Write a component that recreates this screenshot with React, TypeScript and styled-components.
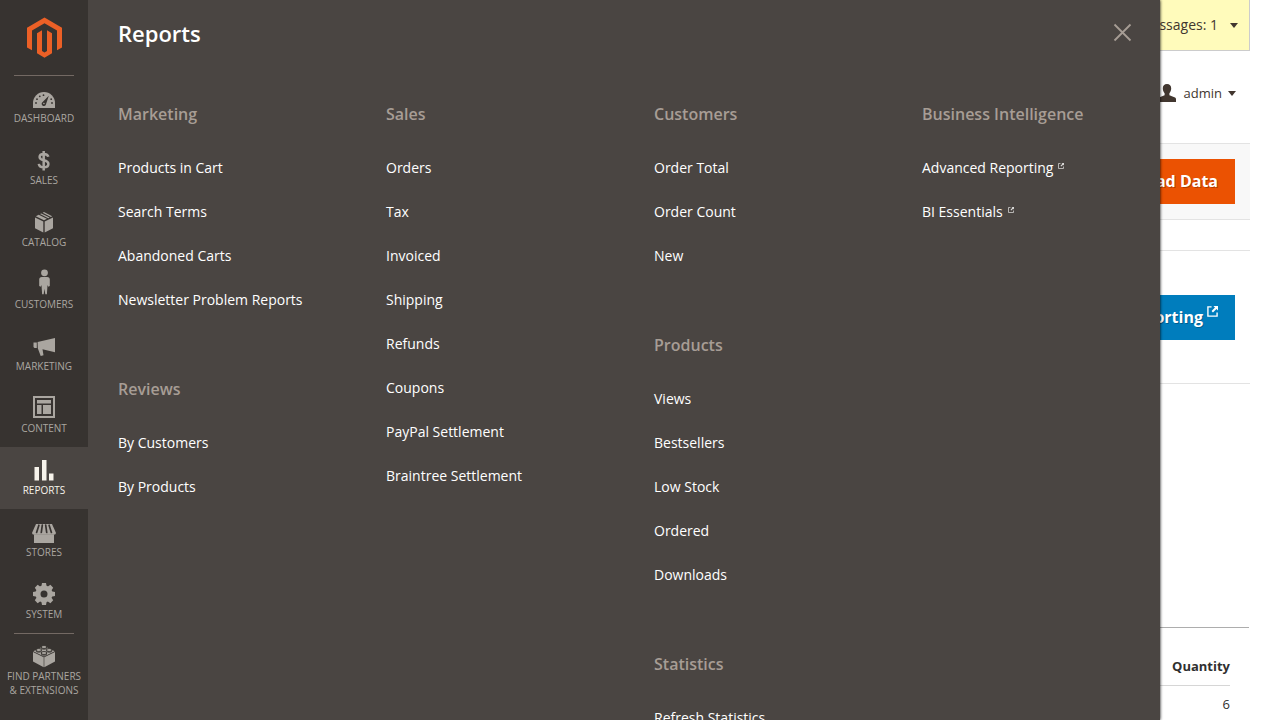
import React from "react";
import styled, { createGlobalStyle } from "styled-components";

const color = {
  rail: "#373330",
  panel: "#4a4542",
  muted: "#aaa6a0",
  heading: "#a79d95",
  active: "#f7f3eb",
  ink: "#41362f",
  orange: "#eb5202",
  blue: "#007dbd",
};

const GlobalStyle = createGlobalStyle`
  *, *::before, *::after { box-sizing: border-box; }
  body {
    margin: 0;
    background: #fff;
    color: ${color.ink};
    font-family: "Open Sans", "Liberation Sans", sans-serif;
    font-size: 14px;
    line-height: 20px;
  }
  a { color: inherit; text-decoration: none; }
  ul { list-style: none; margin: 0; padding: 0; }
  h1, h2 { margin: 0; }
  button { border: 0; background: none; font: inherit; color: inherit; cursor: pointer; }
`;

const Shell = styled.div`
  position: relative;
  display: flex;
  height: 100vh;
  overflow: hidden;
`;

/* ---------- left rail ---------- */

const Rail = styled.nav`
  flex: none;
  width: 88px;
  background: ${color.rail};
`;

const LogoLink = styled.a`
  display: flex;
  justify-content: center;
  height: 75px;
  padding-top: 17px;
`;

const RailItem = styled.li<{ $ruled?: boolean }>`
  background: ${(p) =>
    p.$ruled ? "linear-gradient(#736963, #736963) 50% 0 / 60px 1px no-repeat" : "none"};
`;

const RailLink = styled.a<{ $active?: boolean }>`
  display: flex;
  flex-direction: column;
  align-items: center;
  min-height: 62px;
  padding: 8px 4px 0;
  color: ${(p) => (p.$active ? color.active : color.muted)};
  background: ${(p) => (p.$active ? color.panel : "transparent")};
  font-size: 10px;
  line-height: 14px;
  text-align: center;
  text-transform: uppercase;
`;

const RailIcon = styled.svg`
  display: block;
  width: 40px;
  height: 28px;
  fill: currentColor;
`;

/* ---------- flyout panel ---------- */

const Flyout = styled.section`
  position: absolute;
  z-index: 2;
  top: 0;
  bottom: 0;
  left: 88px;
  right: 120px;
  overflow: hidden;
  padding: 19px 0 0 30px;
  background: ${color.panel};
  box-shadow: 0 0 3px #000;
  clip-path: inset(0 -6px 0 0);
`;

const FlyoutHeader = styled.header`
  display: flex;
  align-items: center;
  justify-content: space-between;
  height: 28px;
  margin-bottom: 55px;
  padding-right: 28px;
`;

const FlyoutTitle = styled.h1`
  color: #fff;
  font-size: 22px;
  font-weight: 600;
  line-height: 28px;
`;

const CloseButton = styled.button`
  display: flex;
  padding: 0 0 2px;
  color: ${color.heading};
`;

const Columns = styled.div`
  display: grid;
  grid-template-columns: repeat(4, minmax(0, 1fr));
  column-gap: 30px;
`;

const Column = styled.div`
  display: flex;
  flex-direction: column;
  gap: 55px;
`;

const GroupTitle = styled.h2`
  margin-bottom: 20px;
  color: ${color.heading};
  font-size: 16px;
  font-weight: 600;
  line-height: 24px;
`;

const GroupLink = styled.a`
  display: flex;
  align-items: center;
  gap: 5px;
  padding: 12px 0;
  color: #fff;
  white-space: nowrap;
`;

const ExternalMark = styled.svg<{ $size: number }>`
  flex: none;
  width: ${(p) => p.$size}px;
  height: ${(p) => p.$size}px;
  margin-bottom: ${(p) => (p.$size > 8 ? 10 : 4)}px;
  opacity: ${(p) => (p.$size > 8 ? 1 : 0.8)};
  fill: currentColor;
`;

/* ---------- page ---------- */

const Page = styled.main`
  flex: 1;
  min-width: 0;
  padding-right: 30px;
`;

const MessageBar = styled.div`
  display: flex;
  justify-content: flex-end;
  height: 51px;
  padding-right: 11px;
  background: #fffbbb;
  border: solid #ccc;
  border-width: 0 1px 1px 0;
`;

const TextButton = styled.button<{ $size: number }>`
  display: flex;
  align-items: center;
  padding: 0;
  font-size: ${(p) => p.$size}px;
  white-space: nowrap;
`;

const Caret = styled.span<{ $gap: number }>`
  margin-left: ${(p) => p.$gap}px;
  border: 4px solid transparent;
  border-top: 5px solid currentColor;
  border-bottom: 0;
`;

const UserBar = styled.div`
  display: flex;
  justify-content: flex-end;
  align-items: center;
  height: 92px;
  padding: 0 14px 8px 0;
`;

const UserIcon = styled.svg`
  width: 18px;
  height: 18px;
  margin-right: 8px;
  fill: ${color.ink};
`;

const ActionBar = styled.div`
  display: flex;
  justify-content: flex-end;
  padding: 15px;
  background: #f8f8f8;
  border: solid #e3e3e3;
  border-width: 1px 0;
`;

const SolidButton = styled.button<{ $tone: string }>`
  display: flex;
  align-items: center;
  gap: 4px;
  height: 45px;
  padding: 0 17px 2px;
  color: #fff;
  background: ${(p) => p.$tone};
  font-size: 16px;
  font-weight: 700;
  text-shadow: 1px 1px 0 rgba(0, 0, 0, 0.25);
  white-space: nowrap;
`;

const PromoRow = styled.section`
  display: flex;
  justify-content: flex-end;
  margin-top: 30px;
  padding: 44px 15px 43px;
  border: solid #e3e3e3;
  border-width: 1px 0;
`;

const TabPanel = styled.section`
  margin: 243px 1px 0 0;
  padding: 20px 19px 0 0;
  border-top: 1px solid #adadad;
`;

const DataTable = styled.table`
  width: 100%;
  border-collapse: collapse;
  color: #303030;
  font-size: 13px;
  line-height: 18px;
  text-align: right;

  th { padding: 9px 0 10px; font-weight: 700; }
  td { padding: 9px 0; border-top: 1px solid #d6d6d6; }
`;

/* ---------- icons ---------- */

const icons = {
  dashboard: (
    <>
      <path d="M9 25v-5a11 11 0 0 1 22 0v5z" />
      <g fill={color.rail}>
        <circle cx="12" cy="20" r="0.9" />
        <circle cx="13" cy="16.2" r="0.9" />
        <circle cx="15.8" cy="13.3" r="0.9" />
        <circle cx="19.5" cy="12.2" r="0.9" />
        <circle cx="27.2" cy="16.2" r="0.9" />
        <circle cx="28" cy="20" r="0.9" />
        <path d="M24.8 12.8 22 21.2a2.2 2.2 0 1 1-3.6-2z" />
      </g>
      <circle cx="19.9" cy="20.5" r="0.8" />
    </>
  ),
  sales: (
    <path
      d="M24.300 11.800C23.900 9.800 22.400 9 19.800 9c-2.700 0-4.200 1.100-4.200 3 0 4.600 8.800 2 8.800 7 0 2.200-1.700 3.300-4.600 3.300-3 0-4.700-1.200-5-3.500M19.700 6v19.500"
      fill="none"
      stroke="currentColor"
      strokeWidth="2.500"
    />
  ),
  catalog: (
    <>
      <path d="M11 10.600 19.300 14.600V25.500L11 21.200zM29 10.600 20.700 14.600V25.500L29 21.200z" />
      <path d="m11.800 9.200 2.900-1.500 8.200 4.100-2.900 1.500zM16 7.100l1.400-.7 8.200 4-1.400.8zM18.700 5.800 20 5l8.200 4.200-1.300.7z" />
    </>
  ),
  customers: (
    <>
      <circle cx="20.500" cy="3.800" r="3.400" />
      <path d="M17.800 8h5.400a2.600 2.600 0 0 1 2.600 2.600v6.300l-1.500.8-.8-1.700-.6 9.200h-1.600l-.8-5.500-.8 5.500h-1.600l-.6-9.200-.8 1.700-1.500-.8v-6.300a2.600 2.600 0 0 1 2.600-2.600z" />
    </>
  ),
  marketing: (
    <path d="M9.500 11.500H12.800V17H10.500L9.500 16zM13.600 11 31 7v14.300l-12.500-3 1 6-2.800.7-2.900-7.700z" />
  ),
  content: (
    <>
      <path d="M9 3h22v22H9zM11 5v18h18V5z" fillRule="evenodd" />
      <path d="M13 7h14v3.500H13zM13 12h4.500v9H13zM19 12h8v9h-8z" />
    </>
  ),
  reports: <path d="M10.500 12H15v13.500h-4.500zM18 5h4.500v20.500H18zM25 18.500h4.500v7H25z" />,
  stores: (
    <>
      <path d="M10 17.500h20v8.500H10z" />
      <path d="M12 7h16l3.800 8.500c.4 1.300-.7 2.300-2 2.300H10.200c-1.300 0-2.400-1-2-2.300z" />
      <path
        d="M14.900 8.200 12.600 15.500M18.300 8.200 17.300 15.500M21.700 8.200 22.700 15.500M25.100 8.200 27.400 15.500"
        stroke={color.rail}
        strokeWidth="1.700"
        strokeLinecap="round"
      />
    </>
  ),
  system: (
    <>
      {[0, 45, 90, 135, 180, 225, 270, 315].map((angle) => (
        <path key={angle} d="M18 4h4l1 5h-6z" transform={`rotate(${angle} 20 15)`} />
      ))}
      <path
        d="M20 6.500a8.500 8.500 0 1 0 0 17a8.500 8.500 0 1 0 0-17zM20 11.500a3.500 3.500 0 1 1 0 7a3.500 3.500 0 1 1 0-7z"
        fillRule="evenodd"
      />
    </>
  ),
  partners: (
    <>
      <path d="M9 10.900 19.700 16.300v9.900L9 20.500zM31 10.900 20.300 16.300v9.900L31 20.500z" />
      <path d="M9.300 10.200 20 4.900l10.700 5.300L20 15.500z" />
      <g stroke={color.rail} strokeWidth="0.900">
        <ellipse cx="20" cy="6.900" rx="2.800" ry="1.300" />
        <ellipse cx="20" cy="6" rx="2.800" ry="1.500" />
        <ellipse cx="14.800" cy="9.900" rx="2.800" ry="1.300" />
        <ellipse cx="14.800" cy="9" rx="2.800" ry="1.500" />
        <ellipse cx="25.200" cy="9.900" rx="2.800" ry="1.300" />
        <ellipse cx="25.200" cy="9" rx="2.800" ry="1.500" />
        <ellipse cx="20" cy="12.900" rx="2.800" ry="1.300" />
        <ellipse cx="20" cy="12" rx="2.800" ry="1.500" />
      </g>
    </>
  ),
};

const Logo = () => (
  <svg width="36" height="41" viewBox="0 0 36 41" fill="#ec6026" role="img" aria-label="Magento">
    <path d="M18.500 .5 36 10.700V30.400L31 33.200V13.600L18.500 6.300 6 13.600V33.200L1 30.400V10.700z" />
    <path d="M11 16.200 16 13.300V34l2.500 1.500 2.500-1.500V13.300l5 2.900v20.100L18.500 40.800 11 36.300z" />
  </svg>
);

const External = ({ size }: { size: number }) => (
  <ExternalMark $size={size} viewBox="0 0 12 12" aria-hidden="true">
    <path d="M5 1H1v10h10V7" fill="none" stroke="currentColor" strokeWidth="1.500" />
    <path d="M7 0h5v5l-1.700-1.700L6.500 7 5 5.500l3.700-3.800z" />
  </ExternalMark>
);

/* ---------- data ---------- */

type RailEntry = { label: string; icon: keyof typeof icons; active?: boolean; ruled?: boolean };

const railEntries: RailEntry[] = [
  { label: "Dashboard", icon: "dashboard", ruled: true },
  { label: "Sales", icon: "sales" },
  { label: "Catalog", icon: "catalog" },
  { label: "Customers", icon: "customers" },
  { label: "Marketing", icon: "marketing" },
  { label: "Content", icon: "content" },
  { label: "Reports", icon: "reports", active: true },
  { label: "Stores", icon: "stores" },
  { label: "System", icon: "system" },
  { label: "Find Partners & Extensions", icon: "partners", ruled: true },
];

type Group = { title: string; links: string[]; external?: boolean };

const columns: Group[][] = [
  [
    {
      title: "Marketing",
      links: ["Products in Cart", "Search Terms", "Abandoned Carts", "Newsletter Problem Reports"],
    },
    { title: "Reviews", links: ["By Customers", "By Products"] },
  ],
  [
    {
      title: "Sales",
      links: [
        "Orders",
        "Tax",
        "Invoiced",
        "Shipping",
        "Refunds",
        "Coupons",
        "PayPal Settlement",
        "Braintree Settlement",
      ],
    },
  ],
  [
    { title: "Customers", links: ["Order Total", "Order Count", "New"] },
    { title: "Products", links: ["Views", "Bestsellers", "Low Stock", "Ordered", "Downloads"] },
    { title: "Statistics", links: ["Refresh Statistics"] },
  ],
  [
    {
      title: "Business Intelligence",
      links: ["Advanced Reporting", "BI Essentials"],
      external: true,
    },
  ],
];

export default function App() {
  return (
    <>
      <GlobalStyle />
      <Shell>
        <Rail aria-label="Main">
          <LogoLink href="#">
            <Logo />
          </LogoLink>
          <ul>
            {railEntries.map(({ label, icon, active, ruled }) => (
              <RailItem key={label} $ruled={ruled}>
                <RailLink href="#" $active={active} aria-current={active ? "page" : undefined}>
                  <RailIcon viewBox="0 0 40 28" aria-hidden="true">
                    {icons[icon]}
                  </RailIcon>
                  {label}
                </RailLink>
              </RailItem>
            ))}
          </ul>
        </Rail>

        <Flyout aria-label="Reports">
          <FlyoutHeader>
            <FlyoutTitle>Reports</FlyoutTitle>
            <CloseButton type="button" aria-label="Close">
              <svg width="20" height="20" viewBox="0 0 20 20" aria-hidden="true">
                <path d="m2.500 2.500 16 16M18.500 2.500l-16 16" stroke="currentColor" strokeWidth="1.800" />
              </svg>
            </CloseButton>
          </FlyoutHeader>
          <Columns>
            {columns.map((groups) => (
              <Column key={groups[0].title}>
                {groups.map(({ title, links, external }) => (
                  <div key={title}>
                    <GroupTitle>{title}</GroupTitle>
                    <ul>
                      {links.map((text) => (
                        <li key={text}>
                          <GroupLink href="#">
                            {text}
                            {external && <External size={6} />}
                          </GroupLink>
                        </li>
                      ))}
                    </ul>
                  </div>
                ))}
              </Column>
            ))}
          </Columns>
        </Flyout>

        <Page>
          <MessageBar>
            <TextButton type="button" $size={14}>
              System Messages: 1<Caret $gap={12} />
            </TextButton>
          </MessageBar>
          <UserBar>
            <TextButton type="button" $size={13}>
              <UserIcon viewBox="0 0 18 18" aria-hidden="true">
                <path d="M9 0c2.700 0 4.200 1.700 4.200 4.300 0 2-.7 3.800-1.800 4.900v2.100l5 2c1 .4 1.600 1 1.600 2V18H0v-2.700c0-1 .6-1.600 1.600-2l5-2V9.200C5.500 8.100 4.800 6.300 4.800 4.300 4.800 1.700 6.300 0 9 0z" />
              </UserIcon>
              admin
              <Caret $gap={6} />
            </TextButton>
          </UserBar>
          <ActionBar>
            <SolidButton type="button" $tone={color.orange}>
              Reload Data
            </SolidButton>
          </ActionBar>
          <PromoRow>
            <SolidButton type="button" $tone={color.blue}>
              Go to Advanced Reporting
              <External size={11} />
            </SolidButton>
          </PromoRow>
          <TabPanel>
            <DataTable>
              <thead>
                <tr>
                  <th scope="col">Quantity</th>
                </tr>
              </thead>
              <tbody>
                <tr>
                  <td>6</td>
                </tr>
              </tbody>
            </DataTable>
          </TabPanel>
        </Page>
      </Shell>
    </>
  );
}
